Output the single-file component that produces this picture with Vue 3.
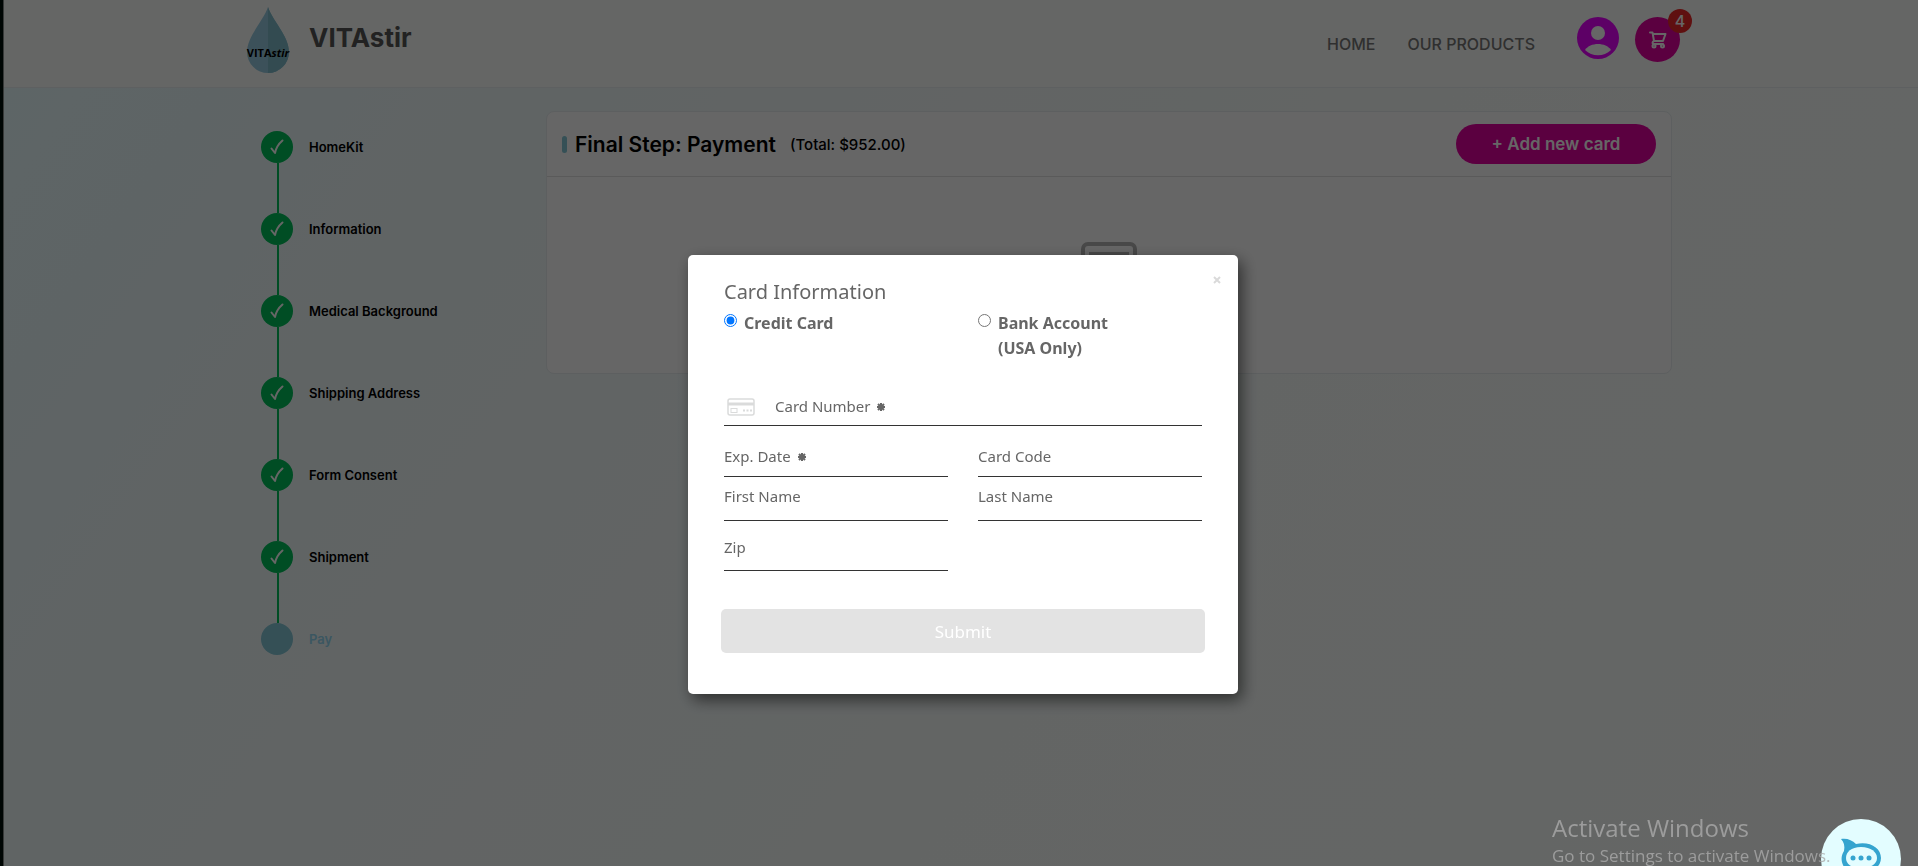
<script setup>
import { ref } from 'vue'

const steps = [
  { label: 'HomeKit', done: true },
  { label: 'Information', done: true },
  { label: 'Medical Background', done: true },
  { label: 'Shipping Address', done: true },
  { label: 'Form Consent', done: true },
  { label: 'Shipment', done: true },
  { label: 'Pay', done: false },
]

const method = ref('card')
const form = ref({ number: '', exp: '', code: '', first: '', last: '', zip: '' })
const fields = [
  { key: 'number', label: 'Card Number', required: true, kind: 'wide' },
  { key: 'exp', label: 'Exp. Date', required: true, kind: 'tall' },
  { key: 'code', label: 'Card Code', kind: 'tall' },
  { key: 'first', label: 'First Name', kind: 'short' },
  { key: 'last', label: 'Last Name', kind: 'short' },
  { key: 'zip', label: 'Zip', kind: 'plain' },
]
</script>

<template>
  <div class="page">
    <header class="topbar">
      <div class="container topbar-inner">
        <a class="brand" href="#">
          <svg class="drop" viewBox="0 0 44 68" width="44" height="68" aria-hidden="true">
            <path d="M22 1C18 14 1 30 1 46a21 21 0 0 0 42 0C43 30 26 14 22 1z" fill="#97cbe0" />
            <path d="M22 1v66a21 21 0 0 0 21-21C43 30 26 14 22 1z" fill="#80bccb" />
            <text x="22" y="51" text-anchor="middle" class="drop-text">VITA<tspan font-style="italic">stir</tspan></text>
          </svg>
          <span class="brand-name">VITAstir</span>
        </a>
        <nav class="nav">
          <a href="#">HOME</a>
          <a href="#">OUR PRODUCTS</a>
        </nav>
        <button class="round profile" aria-label="Profile">
          <svg viewBox="0 0 42 42" width="42" height="42">
            <circle cx="21" cy="21" r="21" fill="#e900ff" />
            <circle cx="21" cy="16" r="7" fill="#fff" />
            <path d="M8 33c5-8 21-8 26 0-7 7-19 7-26 0z" fill="#fff" />
          </svg>
        </button>
        <button class="round cart" aria-label="Cart">
          <svg viewBox="0 0 18 18" width="18" height="18" fill="none" stroke="#fff" stroke-width="2" stroke-linejoin="round" stroke-linecap="round">
            <path d="M1 1.500h2.500l1.500 8.500h9l2.500-7H4M5 10c-2 1-2 3 0 3h9" />
            <circle cx="5" cy="15" r="1.500" />
            <circle cx="13.500" cy="15" r="1.500" />
          </svg>
          <span class="badge">4</span>
        </button>
      </div>
    </header>

    <main class="container layout">
      <ol class="steps">
        <li v-for="s in steps" :key="s.label" class="step" :class="{ current: !s.done }">
          <span class="dot">
            <svg v-if="s.done" viewBox="0 0 14 16" width="14" height="16" fill="none" stroke="#fff" stroke-width="2" stroke-linecap="round" stroke-linejoin="round">
              <path d="M1.500 9.500l3.500 4.500c1-5 4-9.500 7.500-12.500" />
            </svg>
          </span>
          <span>{{ s.label }}</span>
        </li>
      </ol>

      <section class="panel">
        <div class="panel-head">
          <span class="accent"></span>
          <h1>Final Step: Payment</h1>
          <span class="total">(Total: $952.00)</span>
          <button class="add">+ Add new card</button>
        </div>
        <div class="panel-body">
          <svg viewBox="0 0 56 44" width="56" height="44" fill="none" stroke="#b3b3b3" stroke-width="4" aria-hidden="true">
            <rect x="2" y="2" width="52" height="40" rx="5" />
            <path d="M8 12h40" />
          </svg>
        </div>
      </section>
    </main>

    <div class="edge"></div>

    <div class="overlay">
      <form class="dialog" role="dialog" aria-labelledby="dialog-title" @submit.prevent>
        <button class="close" type="button" aria-label="Close">
          <svg viewBox="0 0 8 8" width="8" height="8" stroke="#dadada" stroke-width="2"><path d="M1 1l6 6M7 1L1 7" /></svg>
        </button>
        <h2 id="dialog-title">Card Information</h2>
        <div class="methods">
          <label for="pay-card">
            <input id="pay-card" v-model="method" type="radio" name="method" value="card" />
            <span>Credit Card</span>
          </label>
          <label for="pay-bank">
            <input id="pay-bank" v-model="method" type="radio" name="method" value="bank" />
            <span>Bank Account (USA Only)</span>
          </label>
        </div>
        <div class="fields">
          <div v-for="f in fields" :key="f.key" class="field" :class="f.kind">
            <svg v-if="f.kind === 'wide'" class="card-icon" viewBox="0 0 28 18" width="28" height="18" fill="none" stroke="#dadbdb" aria-hidden="true">
              <rect x="1" y="1" width="26" height="16" rx="2" stroke-width="1.500" />
              <path d="M1 6h26" stroke-width="3" />
              <rect x="4" y="10.500" width="6" height="4" />
              <path d="M16 12.500h9" stroke-width="2" stroke-dasharray="2 1.500" />
            </svg>
            <label :for="f.key">
              {{ f.label }}
              <svg v-if="f.required" class="star" viewBox="0 0 10 10" width="10" height="10" stroke="#666" stroke-width="2" aria-hidden="true">
                <path d="M5 1v8M1 5h8M2 2l6 6M8 2l-6 6" />
              </svg>
            </label>
            <input :id="f.key" v-model="form[f.key]" type="text" />
          </div>
        </div>
        <button class="submit" type="submit" disabled>Submit</button>
      </form>
    </div>

    <button class="chat" aria-label="Chat">
      <svg viewBox="0 0 42 42" width="42" height="42" aria-hidden="true">
        <path d="M1 1c6-1 11 1 15 5 14-3 25 4 25 14S30 36 17 34c-5 4-10 5-16 4 4-4 4-7 2-11-2-5-2-9 1-14C5 8 4 4 1 1z" fill="#35a4cf" />
        <path d="M21 9c10 0 16 5 16 11s-6 10-16 10S6 26 6 20 11 9 21 9z" fill="#e3fdff" />
        <circle cx="13" cy="20" r="2.500" fill="#35a4cf" />
        <circle cx="21" cy="20" r="2.500" fill="#35a4cf" />
        <circle cx="29" cy="20" r="2.500" fill="#35a4cf" />
      </svg>
    </button>
    <div class="watermark">
      <p class="wm-title">Activate Windows</p>
      <p class="wm-text">Go to Settings to activate Windows.</p>
    </div>
  </div>
</template>

<style>
body {
  overflow: hidden;
}
</style>

<style scoped>
* {
  box-sizing: border-box;
}
.page {
  min-height: 100vh;
  background: linear-gradient(125deg, #e8fdff 0%, #f0f9fb 22%, #f8fdfb 60%, #fdfffe 100%);
  font-family: Inter, "Liberation Sans", sans-serif;
  color: #000;
}
button {
  border: 0;
  padding: 0;
  font-family: inherit;
}
a {
  color: inherit;
  text-decoration: none;
}
.container {
  width: 75%;
  max-width: 1426px;
  margin: 0 auto;
}
.topbar {
  height: 88px;
  background: #fcfffc;
  border-bottom: 1px solid #ebeff2;
}
.topbar-inner {
  display: flex;
  align-items: flex-start;
}
.brand {
  display: flex;
  gap: 19px;
  padding-top: 6px;
  margin-right: auto;
}
.drop-text {
  font: 700 11px "Open Sans", sans-serif;
}
.brand-name {
  font-size: 26px;
  font-weight: 700;
  line-height: 32px;
  padding-top: 16px;
  color: #555;
}
.nav {
  display: flex;
  gap: 32px;
  padding-top: 32px;
  margin-right: 42px;
  font-size: 16px;
  font-weight: 500;
  line-height: 24px;
  color: #777;
}
.round {
  position: relative;
  display: grid;
  place-items: center;
  border-radius: 50%;
}
.profile {
  width: 42px;
  height: 42px;
  margin: 17px 16px 0 0;
  background: none;
}
.cart {
  width: 45px;
  height: 45px;
  margin: 17px -8px 0 0;
  background: #e300a0;
}
.badge {
  position: absolute;
  top: -8px;
  right: -12px;
  width: 24px;
  height: 24px;
  border-radius: 50%;
  background: #ed2828;
  color: #fff;
  font-size: 16px;
  line-height: 24px;
  font-weight: 500;
}
.layout {
  display: grid;
  grid-template-columns: 300px 1fr;
  align-items: start;
  padding-top: 23px;
}
.steps {
  list-style: none;
  margin: 0;
  padding: 20px 0 0 15px;
}
.step {
  position: relative;
  display: flex;
  align-items: center;
  gap: 16px;
  height: 32px;
  margin-bottom: 50px;
  font-size: 13px;
  font-weight: 600;
}
.step:not(:last-child)::after {
  content: "";
  position: absolute;
  left: 16px;
  top: 32px;
  width: 2px;
  height: 50px;
  background: #00c05a;
}
.dot {
  display: grid;
  place-items: center;
  width: 32px;
  height: 32px;
  border-radius: 50%;
  background: #00c05a;
}
.current {
  color: #94d8f2;
}
.current .dot {
  background: #84c8d7;
}
.panel {
  min-height: 263px;
  background: #fff;
  border: 1px solid #e8eef0;
  border-radius: 8px;
}
.panel-head {
  display: flex;
  align-items: center;
  height: 65px;
  padding: 0 15px;
  border-bottom: 1px solid #e2e2e2;
}
.accent {
  width: 5px;
  height: 17px;
  margin-right: 8px;
  border-radius: 3px;
  background: #84c8d7;
}
h1 {
  margin: 0 14px 0 0;
  font-size: 21px;
  font-weight: 600;
}
.total {
  font-size: 15px;
  font-weight: 500;
}
.add {
  width: 200px;
  height: 40px;
  margin-left: auto;
  border-radius: 20px;
  background: #e300a0;
  color: #fff;
  font-size: 17px;
  font-weight: 600;
}
.panel-body {
  display: flex;
  justify-content: center;
  padding-top: 65px;
}
.edge {
  position: fixed;
  inset: 0 auto 0 0;
  width: 4px;
  background: #00100c;
  border-right: 1px solid #8a8f8d;
}
.overlay {
  position: fixed;
  inset: 0;
  display: flex;
  justify-content: center;
  align-items: flex-start;
  padding: 255px 0 0 8px;
  background: rgba(0, 0, 0, 0.6);
  font-family: "Noto Sans", "Open Sans", sans-serif;
}
.dialog {
  position: relative;
  width: 550px;
  max-width: 100%;
  padding: 24px 36px 41px;
  background: #fff;
  border-radius: 5px;
  box-shadow: 4px 6px 16px rgba(0, 0, 0, 0.55);
  color: #666;
}
.close {
  position: absolute;
  top: 20px;
  right: 16px;
  width: 10px;
  height: 10px;
  display: grid;
  place-items: center;
  background: none;
}
h2 {
  margin: 0;
  font-size: 20px;
  font-weight: 400;
  line-height: 26px;
}
.methods {
  display: grid;
  grid-template-columns: 1fr 1fr;
  gap: 30px;
  height: 75px;
  padding-top: 6px;
}
.methods label {
  display: flex;
  align-items: flex-start;
  gap: 7px;
  padding-right: 70px;
  font-size: 16px;
  font-weight: 700;
  line-height: 25px;
}
.methods input {
  width: 13px;
  height: 13px;
  margin: 3px 0 0;
  flex: none;
}
.fields {
  display: grid;
  grid-template-columns: 1fr 1fr;
  column-gap: 30px;
}
.field {
  display: grid;
  grid-template-columns: auto 1fr;
  border-bottom: 1px solid #333;
}
.field label {
  grid-area: 1 / 2;
  font-size: 15px;
  line-height: 20px;
  padding-top: 16px;
}
.field input {
  grid-area: 1 / 2;
  min-width: 0;
  border: 0;
  background: none;
  outline: none;
  font: inherit;
}
.wide {
  grid-column: 1 / -1;
  height: 46px;
}
.tall {
  height: 51px;
}
.tall label {
  padding-top: 20px;
}
.short {
  height: 44px;
}
.short label {
  padding-top: 9px;
}
.plain {
  height: 50px;
}
.card-icon {
  margin: 18px 20px 0 3px;
}
.star {
  margin-left: 2px;
}
.submit {
  display: block;
  width: calc(100% + 6px);
  height: 44px;
  margin: 38px -3px 0;
  border-radius: 5px;
  background: #e3e3e3;
  color: #fff;
  font-size: 17px;
}
.chat {
  position: fixed;
  right: 17px;
  bottom: -33px;
  width: 80px;
  height: 80px;
  display: grid;
  place-items: center;
  border-radius: 50%;
  background: #e3fdff;
}
.watermark {
  position: fixed;
  right: 83px;
  bottom: 0;
  width: 283px;
  font-family: "Open Sans", "Noto Sans", sans-serif;
  color: rgba(170, 170, 170, 0.8);
  white-space: nowrap;
}
.watermark p {
  margin: 0;
}
.wm-title {
  font-size: 24px;
  line-height: 36px;
}
.wm-text {
  font-size: 17px;
  line-height: 20px;
}
</style>
